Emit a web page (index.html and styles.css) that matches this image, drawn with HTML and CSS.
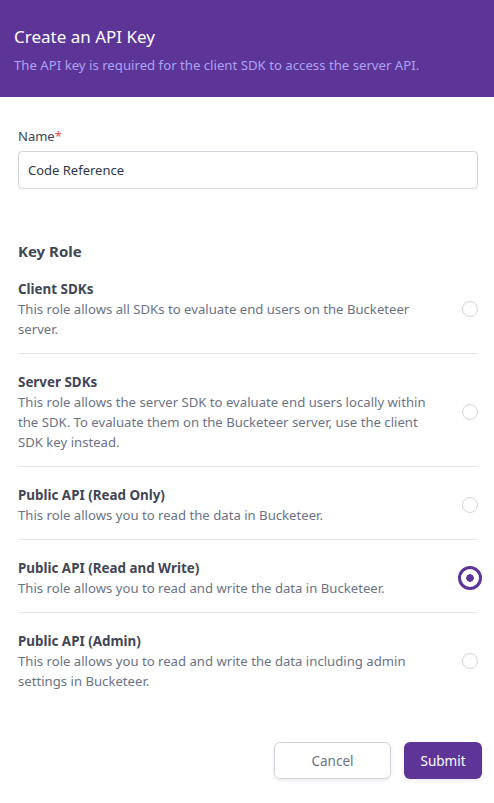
FILE: index.html
```html
<!DOCTYPE html>
<html lang="en">
<head>
<meta charset="utf-8">
<title>Create an API Key</title>
<link rel="stylesheet" href="styles.css">
</head>
<body>
<div class="dialog">
  <header class="head">
    <h1 class="head-title">Create an API Key</h1>
    <p class="head-sub">The API key is required for the client SDK to access the server API.</p>
  </header>
  <main class="body">
    <div class="field">
      <label class="label">Name<span class="req">*</span></label>
      <div class="input">Code Reference</div>
    </div>
    <h2 class="section">Key Role</h2>
    <div class="roles">
      <div class="role">
        <div class="role-text">
          <div class="role-title">Client SDKs</div>
          <div class="role-desc">This role allows all SDKs to evaluate end users on the Bucketeer server.</div>
        </div>
        <span class="radio"></span>
      </div>
      <div class="role">
        <div class="role-text">
          <div class="role-title">Server SDKs</div>
          <div class="role-desc">This role allows the server SDK to evaluate end users locally within the SDK. To evaluate them on the Bucketeer server, use the client SDK key instead.</div>
        </div>
        <span class="radio"></span>
      </div>
      <div class="role">
        <div class="role-text">
          <div class="role-title">Public API (Read Only)</div>
          <div class="role-desc">This role allows you to read the data in Bucketeer.</div>
        </div>
        <span class="radio"></span>
      </div>
      <div class="role">
        <div class="role-text">
          <div class="role-title">Public API (Read and Write)</div>
          <div class="role-desc">This role allows you to read and write the data in Bucketeer.</div>
        </div>
        <span class="radio checked"></span>
      </div>
      <div class="role">
        <div class="role-text">
          <div class="role-title">Public API (Admin)</div>
          <div class="role-desc">This role allows you to read and write the data including admin settings in Bucketeer.</div>
        </div>
        <span class="radio"></span>
      </div>
    </div>
  </main>
  <footer class="foot">
    <button class="btn btn-cancel">Cancel</button>
    <button class="btn btn-submit">Submit</button>
  </footer>
</div>
</body>
</html>
```
FILE: styles.css
```css
* { box-sizing: border-box; }
html, body { margin: 0; padding: 0; background: #ffffff; }
body {
  font-family: "Noto Sans", "Open Sans", sans-serif;
  color: #3b4252;
  width: 494px;
}
.dialog { display: flex; flex-direction: column; }
.head {
  background: #5d3597;
  height: 97px;
  padding: 26px 14px 0 14px;
}
.head-title {
  margin: 0;
  font-size: 17px;
  font-weight: 400;
  line-height: 22px;
  color: #ffffff;
}
.head-sub {
  margin: 8px 0 0 0;
  font-size: 13.2px;
  line-height: 18px;
  color: #aba3f6;
}
.body { padding: 29px 16px 0 18px; }
.field { display: flex; flex-direction: column; gap: 5px; }
.label { font-size: 13px; line-height: 20px; color: #3b4252; }
.req { color: #e5484d; }
.input {
  height: 38px;
  border: 1px solid #d4d4dc;
  border-radius: 4px;
  padding: 0 9px;
  font-size: 13px;
  line-height: 36px;
  color: #2f3646;
}
.section {
  margin: 52px 0 0 0;
  font-size: 15px;
  font-weight: 700;
  line-height: 20px;
  color: #3f4756;
}
.roles { display: flex; flex-direction: column; }
.role {
  display: flex;
  align-items: center;
  justify-content: space-between;
  padding: 18px 0 14px 0;
  border-bottom: 1px solid #e4e4ea;
}
.role:last-child { border-bottom: none; }
.role-text { width: 414px; }
.role-title {
  font-size: 13.4px;
  font-weight: 700;
  line-height: 20px;
  color: #3f4756;
}
.role-desc {
  font-size: 13.15px;
  line-height: 20px;
  color: #6b7385;
}
.radio {
  width: 16px;
  height: 16px;
  border: 1px solid #d3d3dc;
  border-radius: 50%;
  flex: none;
}
.radio.checked {
  width: 24px;
  height: 24px;
  margin-right: -4px;
  border: 3px solid #5d3597;
  background: radial-gradient(circle, #5d3597 0 3.5px, #ffffff 4px);
}
.foot {
  display: flex;
  justify-content: flex-end;
  gap: 13px;
  padding: 37px 12px 24px 0;
}
.btn {
  height: 37px;
  border-radius: 6px;
  font-family: "Noto Sans", "Open Sans", sans-serif;
  font-size: 13.5px;
  cursor: pointer;
}
.btn-cancel {
  width: 117px;
  background: #ffffff;
  border: 1px solid #d2d2dc;
  color: #6b7385;
  box-shadow: 0 2px 4px rgba(0,0,0,0.08);
}
.btn-submit {
  width: 78px;
  background: #5d3597;
  border: none;
  color: #ffffff;
  box-shadow: 0 2px 4px rgba(0,0,0,0.08);
}
```
